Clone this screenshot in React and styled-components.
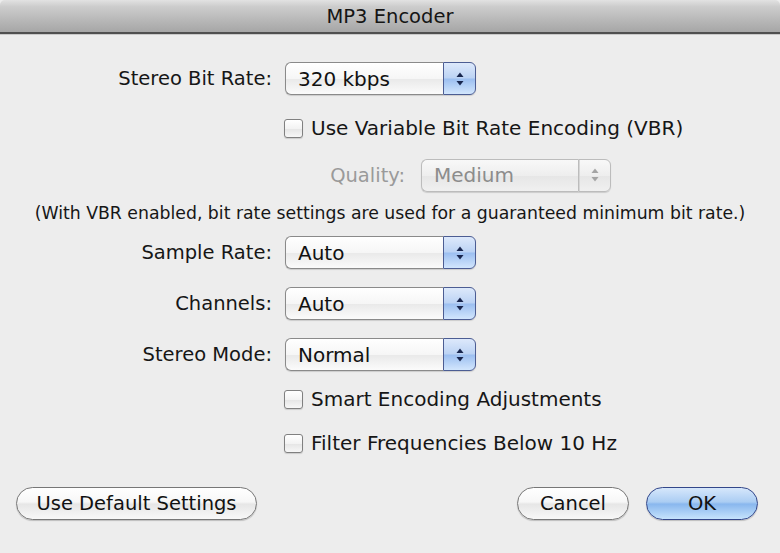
import React from 'react';
import styled, { createGlobalStyle } from 'styled-components';

const Global = createGlobalStyle`
  html, body {
    margin: 0;
    padding: 0;
    background: #ededed;
  }
  body {
    font-family: "DejaVu Sans", "Liberation Sans", sans-serif;
    color: #111;
  }
`;

const Window = styled.div`
  width: 780px;
  height: 553px;
  background: #ededed;
  display: flex;
  flex-direction: column;
  overflow: hidden;
`;

const TitleBar = styled.div`
  height: 32px;
  border-bottom: 2px solid #4f4f4f;
  border-radius: 5px 5px 0 0;
  background: linear-gradient(#e2e2e2, #cdcdcd 20%, #b9b9b9 60%, #a6a6a6);
  box-shadow: 0 1px 0 #c9c9c9;
  display: flex;
  align-items: center;
  justify-content: center;
  font-size: 19.5px;
  color: #151515;
`;

const Row = styled.div`
  display: flex;
  align-items: center;
  margin-top: ${(p) => p.$top}px;
  height: ${(p) => p.$h || 33}px;
`;

const Label = styled.div`
  width: ${(p) => p.$w || 272}px;
  text-align: right;
  padding-right: ${(p) => p.$gap || 13}px;
  box-sizing: content-box;
  font-size: 19.5px;
  color: ${(p) => (p.$dim ? '#9a9a9a' : '#161616')};
  white-space: nowrap;
`;

const Select = styled.div`
  width: ${(p) => p.$w || 191}px;
  height: 33px;
  display: flex;
  border-radius: 6px;
  box-shadow: 0 1px 1px rgba(0, 0, 0, 0.14);
`;

const SelectText = styled.div`
  flex: 1;
  padding-left: 12px;
  display: flex;
  align-items: center;
  font-size: 20px;
  border: 1px solid ${(p) => (p.$disabled ? '#bcbcbc' : '#8a8a8a')};
  border-right: none;
  border-radius: 6px 0 0 6px;
  color: ${(p) => (p.$disabled ? '#8c8c8c' : '#111')};
  background: ${(p) =>
    p.$disabled
      ? 'linear-gradient(#f8f8f8, #eeeeee 50%, #e6e6e6 51%, #f0f0f0)'
      : 'linear-gradient(#ffffff, #f6f6f6 50%, #e9e9e9 51%, #fbfbfb)'};
`;

const Arrows = styled.div`
  width: 31px;
  display: flex;
  align-items: center;
  justify-content: center;
  border: 1px solid ${(p) => (p.$disabled ? '#bcbcbc' : '#4c5d93')};
  border-radius: 0 6px 6px 0;
  background: ${(p) =>
    p.$disabled
      ? 'linear-gradient(#f8f8f8, #eeeeee 50%, #e6e6e6 51%, #f0f0f0)'
      : 'linear-gradient(#dde9fb, #bcd3f4 48%, #9cbff0 52%, #d2e6fd)'};
  box-shadow: ${(p) => (p.$disabled ? 'inset 1px 0 0 #d6d6d6' : 'none')};
`;

const CheckRow = styled(Row)`
  padding-left: 284px;
`;

const Box = styled.div`
  width: 19px;
  height: 19px;
  box-sizing: border-box;
  border: 1px solid #808080;
  border-radius: 3px;
  background: linear-gradient(#ffffff, #f3f3f3 50%, #e5e5e5 51%, #f7f7f7);
  box-shadow: 0 1px 1px rgba(0, 0, 0, 0.14);
  margin-right: 8px;
`;

const CheckText = styled.div`
  font-size: 20px;
  color: #161616;
  white-space: nowrap;
`;

const Note = styled.div`
  margin-top: 12px;
  height: 20px;
  line-height: 20px;
  text-align: center;
  font-size: 17.3px;
  color: #161616;
  white-space: nowrap;
`;

const Footer = styled.div`
  display: flex;
  align-items: center;
  margin-top: 34px;
  padding: 0 22px 0 16px;
`;

const Button = styled.button`
  height: 33px;
  width: ${(p) => p.$w}px;
  margin-left: ${(p) => p.$ml || 0}px;
  box-sizing: border-box;
  border-radius: 17px;
  font-family: inherit;
  font-size: 19.5px;
  color: #111;
  padding: 0;
  border: 1px solid ${(p) => (p.$primary ? '#33478a' : '#777777')};
  background: ${(p) =>
    p.$primary
      ? 'linear-gradient(#d6e7fb, #abcdf3 45%, #89b7ee 52%, #c6e3fc)'
      : 'linear-gradient(#ffffff, #f7f7f7 45%, #e6e6e6 52%, #f8f8f8)'};
  box-shadow: 0 1px 1px rgba(0, 0, 0, 0.2);
`;

const Spacer = styled.div`
  flex: 1;
`;

function ArrowIcon({ disabled }) {
  const c = disabled ? '#a4a4a4' : '#18264e';
  return (
    <svg width="10" height="16" viewBox="0 0 10 16">
      <path d="M5 1.5 L8.5 6 H1.5 Z" fill={c} />
      <path d="M5 14.5 L8.5 10 H1.5 Z" fill={c} />
    </svg>
  );
}

function PopUp({ value, disabled, width }) {
  return (
    <Select $w={width}>
      <SelectText $disabled={disabled}>{value}</SelectText>
      <Arrows $disabled={disabled}>
        <ArrowIcon disabled={disabled} />
      </Arrows>
    </Select>
  );
}

function Check({ label, top }) {
  return (
    <CheckRow $top={top} $h={20}>
      <Box />
      <CheckText>{label}</CheckText>
    </CheckRow>
  );
}

export default function App() {
  return (
    <Window>
      <Global />
      <TitleBar>MP3 Encoder</TitleBar>

      <Row $top={28}>
        <Label>Stereo Bit Rate:</Label>
        <PopUp value="320 kbps" />
      </Row>

      <Check top={23} label="Use Variable Bit Rate Encoding (VBR)" />

      <Row $top={21} $h={32}>
        <Label $w={405} $gap={16} $dim>Quality:</Label>
        <PopUp value="Medium" width={190} disabled />
      </Row>

      <Note>(With VBR enabled, bit rate settings are used for a guaranteed minimum bit rate.)</Note>

      <Row $top={13}>
        <Label>Sample Rate:</Label>
        <PopUp value="Auto" />
      </Row>
      <Row $top={18}>
        <Label>Channels:</Label>
        <PopUp value="Auto" />
      </Row>
      <Row $top={18}>
        <Label>Stereo Mode:</Label>
        <PopUp value="Normal" />
      </Row>

      <Check top={18} label="Smart Encoding Adjustments" />
      <Check top={24} label="Filter Frequencies Below 10 Hz" />

      <Footer>
        <Button $w={241}>Use Default Settings</Button>
        <Spacer />
        <Button $w={112}>Cancel</Button>
        <Button $w={112} $ml={17} $primary>OK</Button>
      </Footer>
    </Window>
  );
}
